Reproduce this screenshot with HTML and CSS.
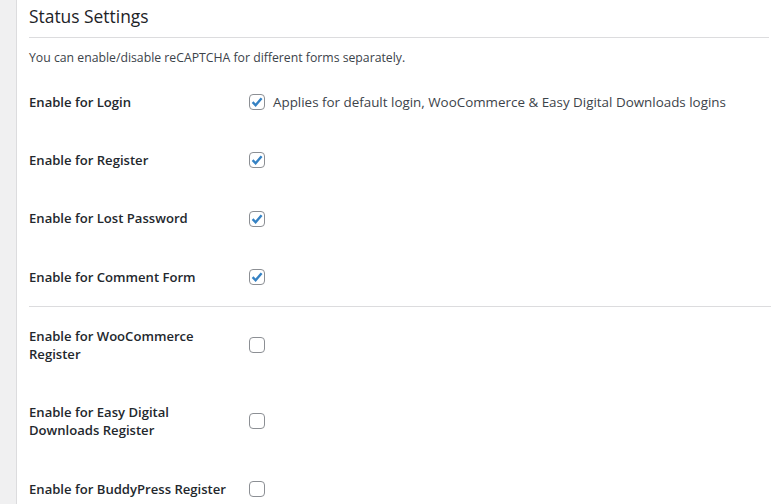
FILE: index.html
```html
<!DOCTYPE html>
<html>
<head>
<meta charset="utf-8">
<link rel="stylesheet" href="styles.css">
</head>
<body>
<div class="page">
  <div class="sidebar"></div>
  <main class="main">
    <h2 class="title">Status Settings</h2>
    <p class="desc">You can enable/disable reCAPTCHA for different forms separately.</p>
    <table class="form-table">
      <tr>
        <th>Enable for Login</th>
        <td><label class="opt"><span class="cb checked"><svg viewBox="0 0 16 16" width="16" height="16"><path d="M3.6 8.2 L6.6 11.2 L12.6 4.2" /></svg></span><span>Applies for default login, WooCommerce &amp; Easy Digital Downloads logins</span></label></td>
      </tr>
      <tr>
        <th>Enable for Register</th>
        <td><span class="cb checked"><svg viewBox="0 0 16 16" width="16" height="16"><path d="M3.6 8.2 L6.6 11.2 L12.6 4.2" /></svg></span></td>
      </tr>
      <tr>
        <th>Enable for Lost Password</th>
        <td><span class="cb checked"><svg viewBox="0 0 16 16" width="16" height="16"><path d="M3.6 8.2 L6.6 11.2 L12.6 4.2" /></svg></span></td>
      </tr>
      <tr class="last">
        <th>Enable for Comment Form</th>
        <td><span class="cb checked"><svg viewBox="0 0 16 16" width="16" height="16"><path d="M3.6 8.2 L6.6 11.2 L12.6 4.2" /></svg></span></td>
      </tr>
      <tr class="sep">
        <th>Enable for WooCommerce Register</th>
        <td><span class="cb"></span></td>
      </tr>
      <tr>
        <th>Enable for Easy Digital Downloads Register</th>
        <td><span class="cb"></span></td>
      </tr>
      <tr>
        <th>Enable for BuddyPress Register</th>
        <td><span class="cb"></span></td>
      </tr>
    </table>
  </main>
</div>
</body>
</html>
```

FILE: styles.css
```css
html, body {
  margin: 0;
  padding: 0;
  background: #ffffff;
  overflow: hidden;
}
body {
  font-family: "Open Sans", "Noto Sans", sans-serif;
  color: #1d2327;
}
.page {
  display: flex;
  min-height: 504px;
}
.sidebar {
  width: 16px;
  flex: none;
  background: #f0f0f1;
  border-right: 1px solid #dcdcde;
}
.main {
  flex: 1;
  padding-left: 12px;
  min-width: 0;
}
.title {
  margin: 0 2px 0 0;
  padding: 5px 0 9px;
  font-size: 17.4px;
  font-weight: 400;
  line-height: 23px;
  color: #1d2327;
  border-bottom: 1px solid #dcdcde;
}
.desc {
  margin: 11px 0 0;
  font-size: 12.25px;
  line-height: 17px;
  color: #3c434a;
}
.form-table {
  border-collapse: collapse;
  margin-top: 7px;
  width: 100%;
}
.form-table th {
  width: 200px;
  padding: 20px 20px 20px 0;
  text-align: left;
  vertical-align: top;
  font-size: 13.1px;
  font-weight: 600;
  line-height: 18.2px;
  color: #23282d;
}
.form-table td {
  padding: 0;
  vertical-align: middle;
  font-size: 13.4px;
  line-height: 18.2px;
  color: #3c434a;
}
.form-table tr.sep th,
.form-table tr.sep td {
  border-top: 1px solid #dcdcde;
}
.opt {
  display: flex;
  align-items: center;
  gap: 8px;
}
.cb {
  display: block;
  box-sizing: border-box;
  width: 16px;
  height: 16px;
  border: 1px solid #8c8f94;
  border-radius: 4px;
  background: #fff;
  flex: none;
}
.cb svg {
  display: block;
  margin: -1px;
  fill: none;
  stroke: #3582c4;
  stroke-width: 2.4;
  stroke-linecap: butt;
  stroke-linejoin: miter;
}
```
